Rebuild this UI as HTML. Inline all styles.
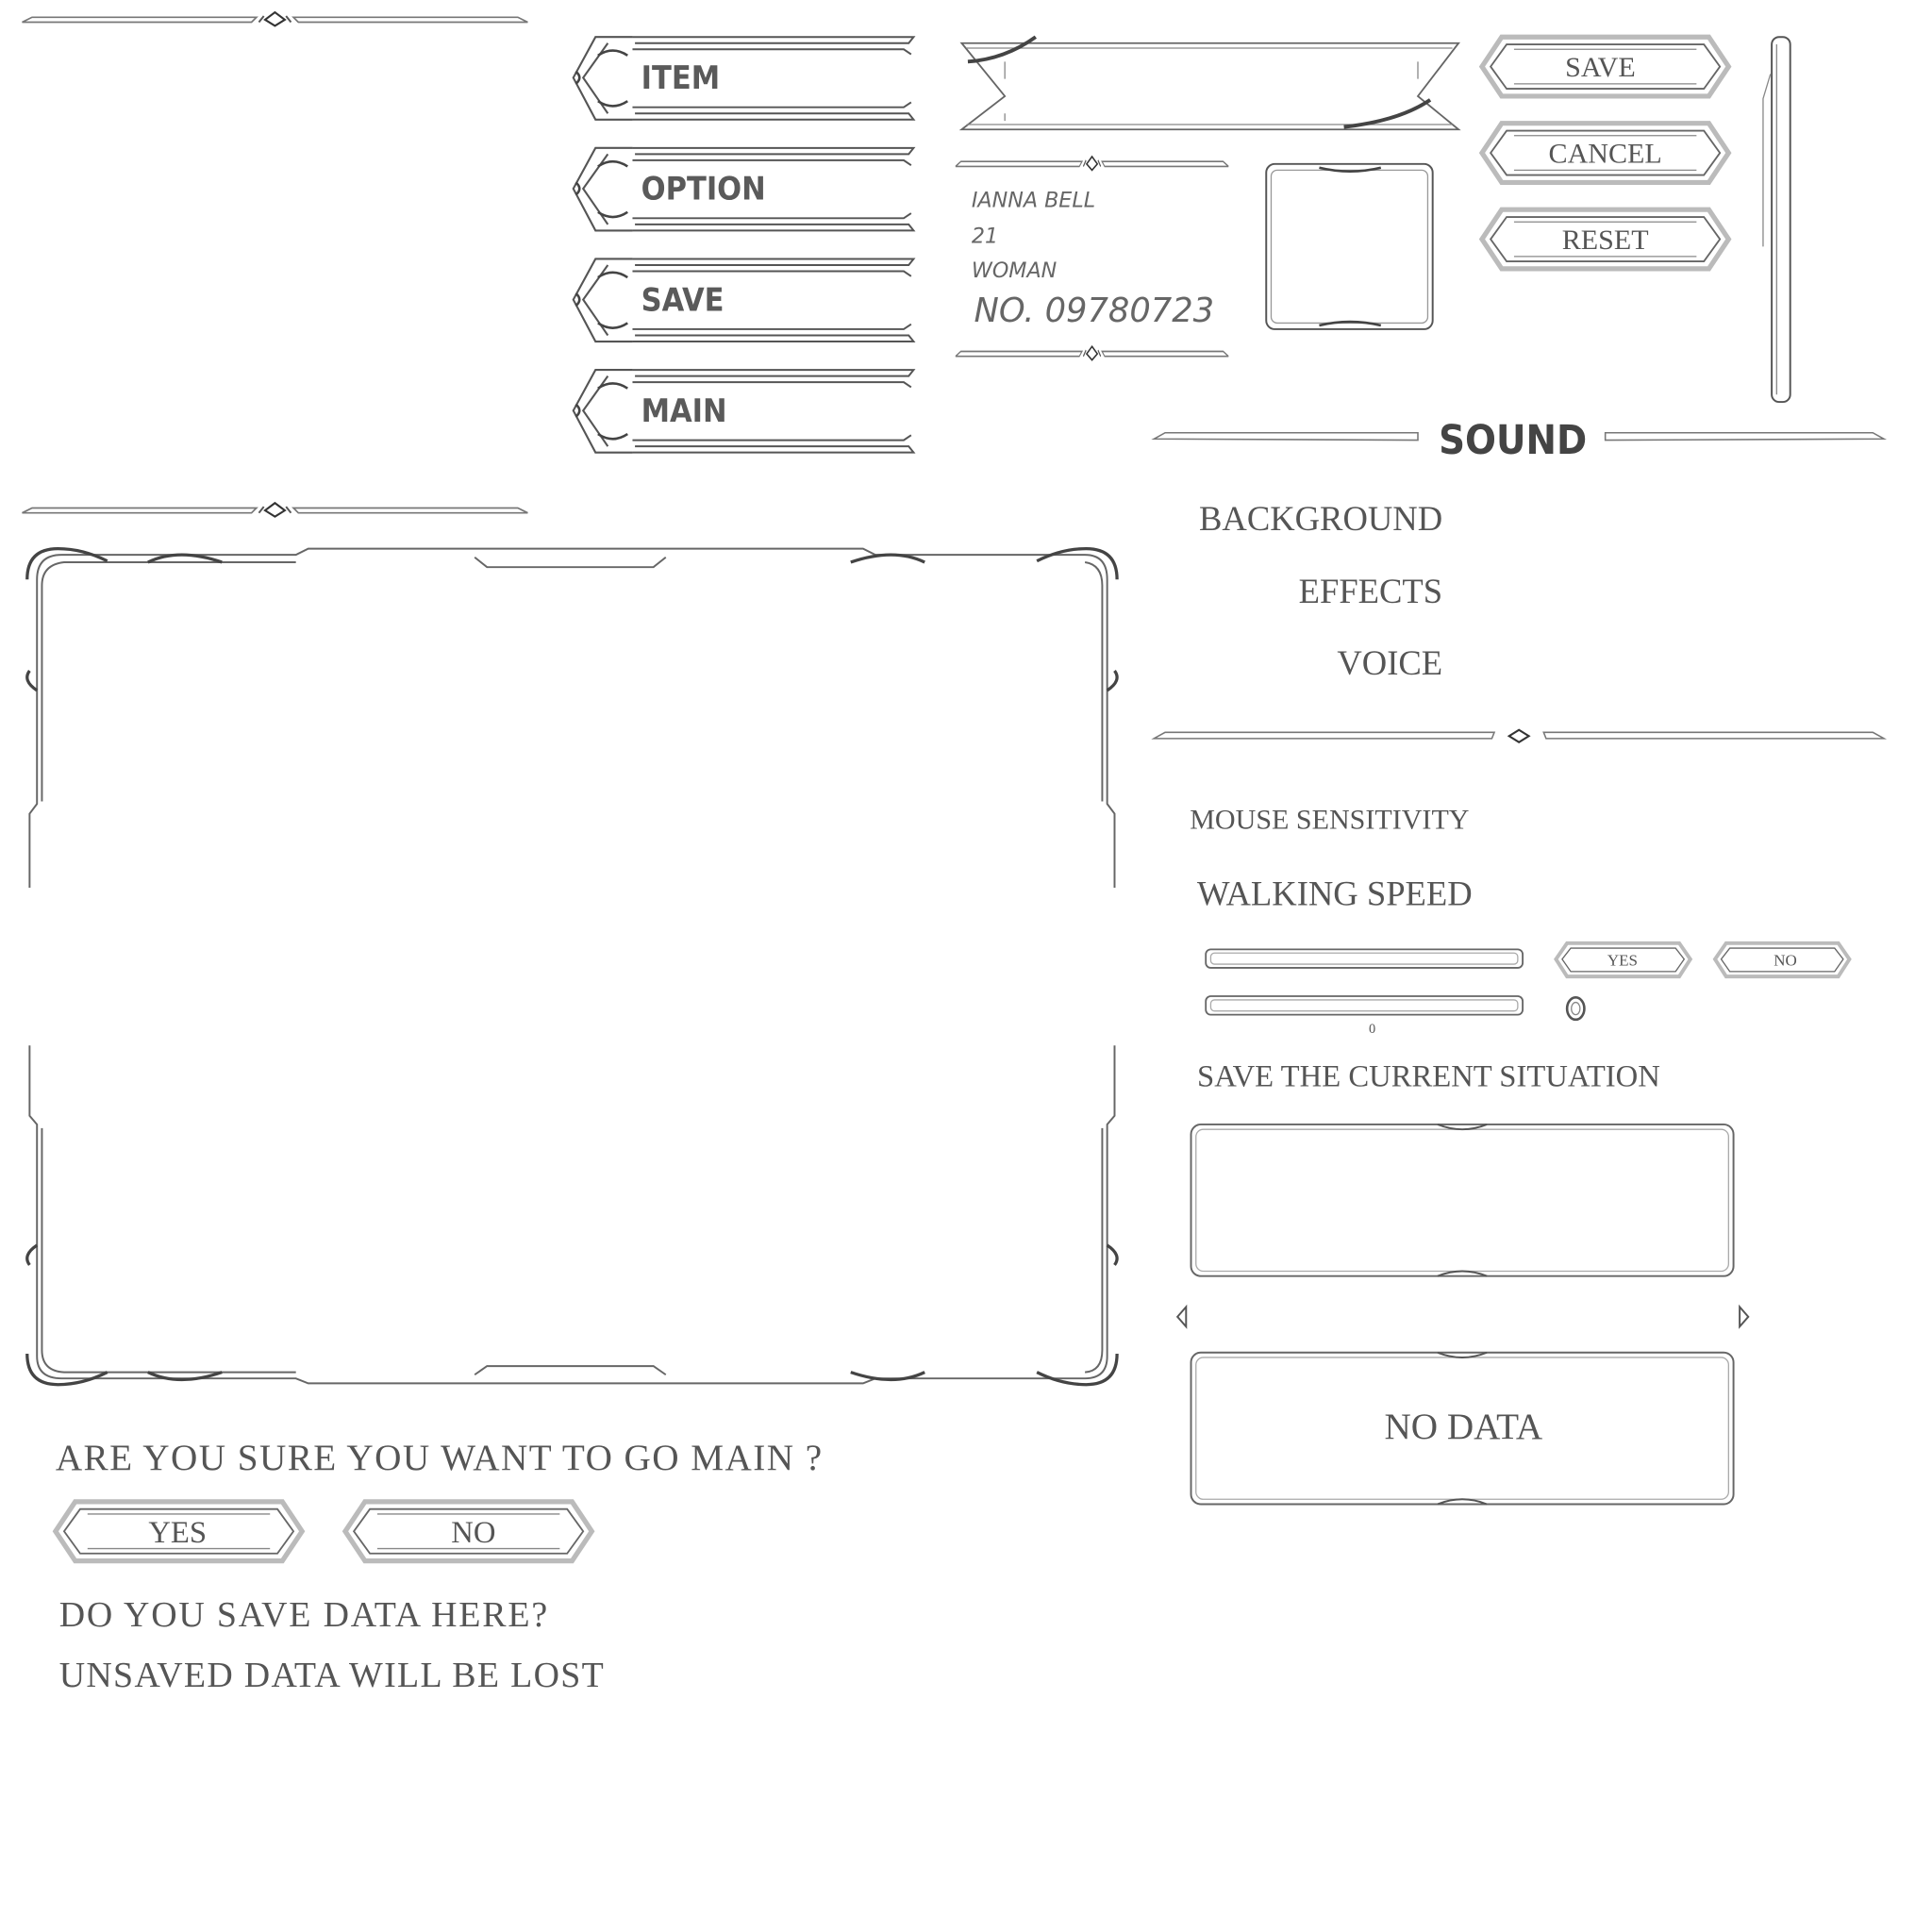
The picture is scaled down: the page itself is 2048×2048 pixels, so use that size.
<!DOCTYPE html>
<html><head><meta charset="utf-8"><style>
html,body{margin:0;padding:0;background:#fff;}
svg{display:block}
text{font-family:"Liberation Serif",serif;fill:#555}
.b{font-family:"DejaVu Sans Condensed","DejaVu Sans","Liberation Sans",sans-serif;font-weight:bold;fill:#5a5a5a}
.h{font-family:"DejaVu Sans","Liberation Sans",sans-serif;font-style:italic;fill:#666;font-weight:300}
</style></head><body>
<svg width="2048" height="2048" viewBox="0 0 1567 1567" xmlns="http://www.w3.org/2000/svg">
<defs>
<g id="div">
 <path d="M0 4 L8 0 L190 0 L186 4 Z" fill="none" stroke="#777" stroke-width="1.3"/>
 <path d="M410 4 L402 0 L220 0 L224 4 Z" fill="none" stroke="#777" stroke-width="1.3"/>
 <path d="M205 -4 L213 2 L205 7 L197 2 Z" fill="none" stroke="#333" stroke-width="1.6"/>
 <path d="M192 4 L196 -1 M218 4 L214 -1" stroke="#555" stroke-width="1.5"/>
</g>
<g id="menu">
 <path d="M50 0 L278 0 L274 5 L52 5 M50 10 L270 10 L276 14" fill="none" stroke="#555" stroke-width="1.5"/>
 <path d="M50 67 L278 67 L274 62 L52 62 M50 57 L270 57 L276 53" fill="none" stroke="#555" stroke-width="1.5"/>
 <path d="M50 0 L20 0 L2 33 L20 67 L50 67 M30 5 L10 33 L30 62" fill="none" stroke="#555" stroke-width="1.6"/>
 <path d="M22 15 q12 -8 24 0 M22 52 q12 8 24 0 M4 28 q6 5 0 10" fill="none" stroke="#444" stroke-width="2"/>
</g>
<g id="btn">
 <path d="M16 0 L184 0 L200 24 L184 48 L16 48 L0 24 Z" fill="none" stroke="#bbb" stroke-width="4"/>
 <path d="M20 6 L180 6 L193 24 L180 42 L20 42 L7 24 Z" fill="none" stroke="#666" stroke-width="1.4"/>
 <path d="M26 10 L174 10 M26 38 L174 38" stroke="#888" stroke-width="1"/>
</g>
<g id="sbtn">
 <path d="M9 0 L100 0 L109 13 L100 27 L9 27 L0 13 Z" fill="none" stroke="#bbb" stroke-width="3"/>
 <path d="M12 4 L97 4 L104 13 L97 23 L12 23 L5 13 Z" fill="none" stroke="#666" stroke-width="1"/>
</g>
<g id="slot">
 <rect x="0" y="0" width="440" height="123" rx="8" fill="none" stroke="#666" stroke-width="1.5"/>
 <rect x="4" y="4" width="432" height="115" rx="6" fill="none" stroke="#aaa" stroke-width="1"/>
 <path d="M200 0 q20 8 40 0 M200 123 q20 -8 40 0" fill="none" stroke="#555" stroke-width="1.5"/>
</g>
</defs>

<use href="#div" x="18" y="14"/>
<use href="#div" x="18" y="412"/>

<use href="#menu" x="463" y="30"/>
<use href="#menu" x="463" y="120"/>
<use href="#menu" x="463" y="210"/>
<use href="#menu" x="463" y="300"/>
<text class="b" x="520" y="72" font-size="26">ITEM</text>
<text class="b" x="520" y="162" font-size="26">OPTION</text>
<text class="b" x="520" y="252" font-size="26">SAVE</text>
<text class="b" x="520" y="342" font-size="26">MAIN</text>

<path d="M780 35 L1183 35 L1150 78 L1183 105 L780 105 L815 78 Z" fill="none" stroke="#666" stroke-width="1.4"/>
<path d="M784 39 L1178 39 M784 101 L1178 101 M815 50 L815 64 M1150 50 L1150 64 M815 92 L815 98" fill="none" stroke="#888" stroke-width="1"/>
<path d="M785 50 q30 -2 55 -20 M1090 103 q45 -5 70 -22" fill="none" stroke="#444" stroke-width="3"/>

<use href="#div" x="775" y="131" transform="translate(775 131) scale(0.54 1) translate(-775 -131)"/>
<use href="#div" x="775" y="285" transform="translate(775 285) scale(0.54 1) translate(-775 -285)"/>
<text class="h" x="788" y="168" font-size="17">IANNA BELL</text>
<text class="h" x="788" y="197" font-size="17">21</text>
<text class="h" x="788" y="225" font-size="17">WOMAN</text>
<text class="h" x="790" y="261" font-size="27">NO. 09780723</text>

<rect x="1027" y="133" width="135" height="134" rx="7" fill="none" stroke="#555" stroke-width="1.5"/>
<rect x="1031" y="138" width="127" height="124" rx="5" fill="none" stroke="#999" stroke-width="1"/>
<path d="M1070 136 q25 6 50 0 M1070 264 q25 -6 50 0" fill="none" stroke="#444" stroke-width="2"/>

<use href="#btn" x="1202" y="30"/>
<use href="#btn" x="1202" y="100"/>
<use href="#btn" x="1202" y="170"/>
<text x="1298" y="62" font-size="23" text-anchor="middle">SAVE</text>
<text x="1302" y="132" font-size="23" text-anchor="middle">CANCEL</text>
<text x="1302" y="202" font-size="23" text-anchor="middle">RESET</text>

<rect x="1437" y="30" width="15" height="296" rx="6" fill="none" stroke="#555" stroke-width="1.5"/>
<path d="M1441 36 L1441 320 M1436 60 L1430 80 L1430 200" fill="none" stroke="#888" stroke-width="1"/>

<path d="M936 356 L945 351 L1150 351 L1150 357 Z M1528 356 L1519 351 L1302 351 L1302 357 Z" fill="none" stroke="#777" stroke-width="1.2"/>
<text class="b" x="1227" y="368" font-size="33" text-anchor="middle" style="fill:#444">SOUND</text>
<text x="1170" y="430" font-size="28" text-anchor="end">BACKGROUND</text>
<text x="1170" y="489" font-size="28" text-anchor="end">EFFECTS</text>
<text x="1170" y="547" font-size="28" text-anchor="end">VOICE</text>

<path d="M936 599 L945 594 L1212 594 L1210 599 Z M1528 599 L1519 594 L1252 594 L1254 599 Z" fill="none" stroke="#777" stroke-width="1.2"/>
<path d="M1232 592 L1240 597 L1232 602 L1224 597 Z" fill="none" stroke="#333" stroke-width="1.6"/>

<text x="965" y="672" font-size="23">MOUSE SENSITIVITY</text>
<text x="971" y="734" font-size="28">WALKING SPEED</text>

<rect x="978" y="770" width="257" height="15" rx="4" fill="none" stroke="#666" stroke-width="1.4"/>
<rect x="982" y="773" width="249" height="9" rx="3" fill="none" stroke="#aaa" stroke-width="1"/>
<rect x="978" y="808" width="257" height="15" rx="4" fill="none" stroke="#666" stroke-width="1.4"/>
<rect x="982" y="811" width="249" height="9" rx="3" fill="none" stroke="#aaa" stroke-width="1"/>
<text x="1113" y="838" font-size="11" text-anchor="middle">0</text>
<use href="#sbtn" x="1262" y="765"/>
<use href="#sbtn" x="1391" y="765"/>
<text x="1316" y="783" font-size="13" text-anchor="middle">YES</text>
<text x="1448" y="783" font-size="13" text-anchor="middle">NO</text>
<ellipse cx="1278" cy="818" rx="7" ry="9" fill="none" stroke="#555" stroke-width="2"/>
<ellipse cx="1278" cy="818" rx="3.5" ry="5" fill="none" stroke="#888" stroke-width="1"/>

<text x="971" y="881" font-size="25">SAVE THE CURRENT SITUATION</text>
<use href="#slot" x="966" y="912"/>
<use href="#slot" x="966" y="1097"/>
<path d="M962 1060 L955 1068 L962 1076 Z M1411 1060 L1418 1068 L1411 1076 Z" fill="none" stroke="#555" stroke-width="1.5"/>
<text x="1187" y="1167" font-size="30" text-anchor="middle">NO DATA</text>

<g fill="none" stroke="#666" stroke-width="1.5">
 <path d="M24 720 L24 660 L30 652 L30 470 Q30 450 50 450 L240 450 L250 445 L700 445 L710 450 L880 450 Q898 450 898 470 L898 652 L904 660 L904 720"/>
 <path d="M34 650 L34 475 Q34 458 52 456 L240 456 M880 456 Q894 458 894 475 L894 650"/>
 <path d="M24 848 L24 905 L30 912 L30 1100 Q30 1118 50 1118 L240 1118 L250 1122 L700 1122 L710 1118 L880 1118 Q898 1118 898 1100 L898 912 L904 905 L904 848"/>
 <path d="M34 915 L34 1095 Q34 1112 52 1113 L240 1113 M880 1113 Q894 1112 894 1095 L894 915"/>
 <path d="M385 452 L395 460 L530 460 L540 452 M385 1115 L395 1108 L530 1108 L540 1115"/>
</g>
<g fill="none" stroke="#444" stroke-width="2.5">
 <path d="M22 470 q0 -25 25 -25 q20 0 40 10 M22 1098 q0 25 25 25 q20 0 40 -10 M906 470 q0 -25 -25 -25 q-20 0 -40 10 M906 1098 q0 25 -25 25 q-20 0 -40 -10"/>
 <path d="M120 456 q25 -12 60 0 M750 456 q-25 -12 -60 0 M120 1113 q25 12 60 0 M750 1113 q-25 12 -60 0"/>
 <path d="M30 560 q-12 -8 -6 -16 M898 560 q12 -8 6 -16 M30 1010 q-12 8 -6 16 M898 1010 q12 8 6 16"/>
</g>

<text x="45" y="1192" font-size="30" letter-spacing="1.1">ARE YOU SURE YOU WANT TO GO MAIN ?</text>
<use href="#btn" x="45" y="1218"/>
<use href="#btn" x="280" y="1218"/>
<text x="144" y="1251" font-size="25" text-anchor="middle">YES</text>
<text x="384" y="1251" font-size="25" text-anchor="middle">NO</text>
<text x="48" y="1319" font-size="29" letter-spacing="1.4">DO YOU SAVE DATA HERE?</text>
<text x="48" y="1368" font-size="29" letter-spacing="1.0">UNSAVED DATA WILL BE LOST</text>
</svg>
</body></html>
